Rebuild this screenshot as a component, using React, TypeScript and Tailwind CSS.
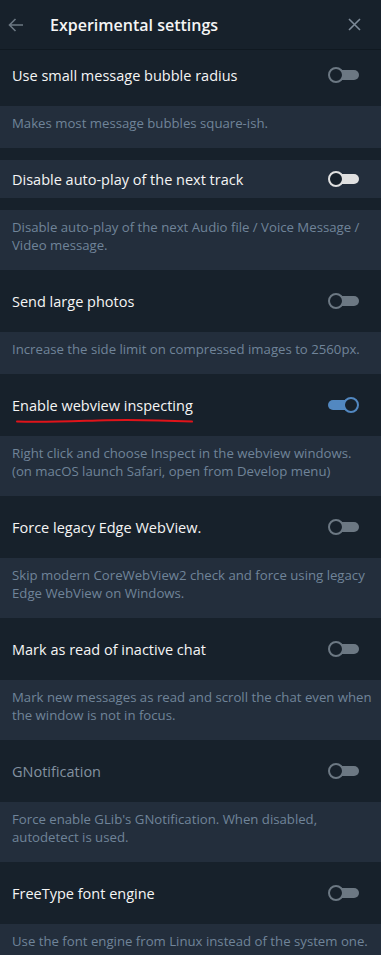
import React from 'react';

type Item = {
  label: string;
  desc: string[];
  on?: boolean;
  hover?: boolean;
  muted?: boolean;
  underline?: boolean;
};

const items: Item[] = [
  { label: 'Use small message bubble radius', desc: ['Makes most message bubbles square-ish.'] },
  {
    label: 'Disable auto-play of the next track',
    desc: ['Disable auto-play of the next Audio file / Voice Message /', 'Video message.'],
    hover: true,
  },
  { label: 'Send large photos', desc: ['Increase the side limit on compressed images to 2560px.'] },
  {
    label: 'Enable webview inspecting',
    desc: ['Right click and choose Inspect in the webview windows.', '(on macOS launch Safari, open from Develop menu)'],
    on: true,
    underline: true,
  },
  {
    label: 'Force legacy Edge WebView.',
    desc: ['Skip modern CoreWebView2 check and force using legacy', 'Edge WebView on Windows.'],
  },
  {
    label: 'Mark as read of inactive chat',
    desc: ['Mark new messages as read and scroll the chat even when', 'the window is not in focus.'],
  },
  {
    label: 'GNotification',
    desc: ["Force enable GLib's GNotification. When disabled,", 'autodetect is used.'],
    muted: true,
  },
  { label: 'FreeType font engine', desc: ['Use the font engine from Linux instead of the system one.'] },
];

function Toggle({ on, hover }: { on?: boolean; hover?: boolean }) {
  if (on) {
    return (
      <div className="relative h-4 w-[31px]">
        <div className="absolute left-0 top-[3px] h-[10px] w-[24px] rounded-full bg-[#5288c1]" />
        <div className="absolute right-0 top-0 h-4 w-4 rounded-full border-2 border-[#5288c1] bg-[#17212b]" />
      </div>
    );
  }
  return (
    <div className="relative h-4 w-[31px]">
      <div
        className={`absolute right-0 top-[3px] h-[10px] w-[24px] rounded-full ${hover ? 'bg-[#e0e0e0]' : 'bg-[#6c7883]'}`}
      />
      <div
        className={`absolute left-0 top-0 h-4 w-4 rounded-full border-2 bg-[#17212b] ${hover ? 'border-[#e0e0e0]' : 'border-[#6c7883]'}`}
      />
    </div>
  );
}

export default function App() {
  return (
    <div
      className="h-[955px] w-[381px] overflow-hidden bg-[#17212b]"
      style={{ fontFamily: '"Open Sans", "Noto Sans", sans-serif' }}
    >
      {/* header */}
      <div className="flex h-[50px] items-center border-b border-[#101921] pl-[8px] pr-[20px]">
        <svg width="16" height="14" viewBox="0 0 16 14" fill="none" stroke="#6c7883" strokeWidth="1.6">
          <path d="M15 7H1.5M7.5 1L1.5 7l6 6" />
        </svg>
        <span className="ml-[26px] flex-1 text-[16px] font-semibold text-[#f5f5f5]">Experimental settings</span>
        <svg width="13" height="13" viewBox="0 0 13 13" stroke="#7d8a98" strokeWidth="1.6">
          <path d="M1 1l11 11M12 1L1 12" />
        </svg>
      </div>

      {items.map((it, i) => (
        <div key={it.label}>
          <div className={i === 0 ? 'pb-3 pt-[6px]' : 'py-3'}>
            <div
              className={`flex h-[38px] items-center justify-between pl-3 pr-[22px] ${it.hover ? 'bg-[#232e3c]' : ''}`}
            >
              <div className="relative">
                <span className={`text-[14.5px] ${it.muted ? 'text-[#8391a0]' : 'text-[#f5f5f5]'}`}>{it.label}</span>
                {it.underline && (
                  <svg
                    className="absolute left-[4px] top-[25px]"
                    width="178"
                    height="6"
                    viewBox="0 0 178 6"
                    fill="none"
                  >
                    <path
                      d="M1 3.5C30 4.5 60 3 90 2.2C120 1.6 150 2.4 176 3.6"
                      stroke="#e0141a"
                      strokeWidth="2"
                      strokeLinecap="round"
                    />
                  </svg>
                )}
              </div>
              <Toggle on={it.on} hover={it.hover} />
            </div>
          </div>
          <div className="bg-[#232e3c] px-3 pb-4 pt-[8px] text-[13.2px] leading-[18px] text-[#708499]">
            {it.desc.map((d) => (
              <div key={d} className="whitespace-nowrap">
                {d}
              </div>
            ))}
          </div>
        </div>
      ))}
    </div>
  );
}
